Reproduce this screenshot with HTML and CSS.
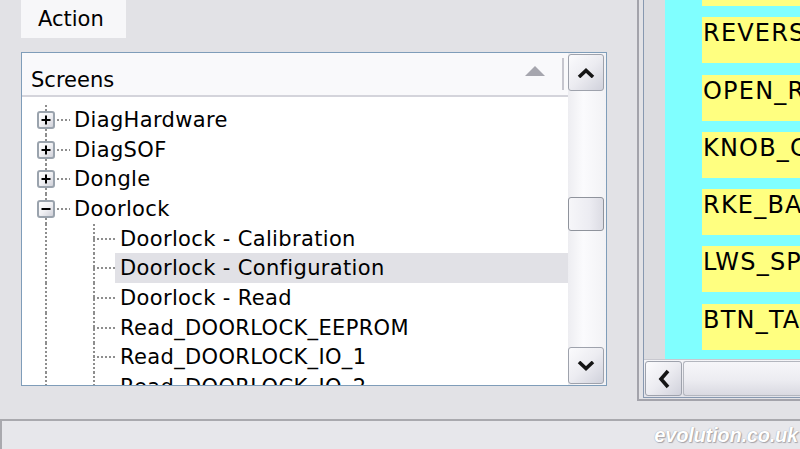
FILE: index.html
```html
<!DOCTYPE html>
<html>
<head>
<meta charset="utf-8">
<link rel="stylesheet" href="styles.css">
</head>
<body>
<div class="app">
  <div class="main">
    <div class="left">
      <div class="tab">Action</div>
      <div class="tree">
        <div class="tree-main">
          <div class="head">
            <span class="head-text">Screens</span>
            <svg class="sort" width="20" height="10" viewBox="0 0 20 10"><path d="M0 10 L10 0 L20 10Z" fill="#a6a6ae"/></svg>
            <span class="sep"></span>
          </div>
          <div class="body">
            <div class="row"><div class="g"><span class="exp"><svg width="12" height="12" viewBox="0 0 12 12"><path d="M1.5 6h9M6 1.5v9" stroke="#000" stroke-width="2"/></svg></span><span class="conn"></span></div><div class="txt top">DiagHardware</div></div>
            <div class="row"><div class="g"><span class="exp"><svg width="12" height="12" viewBox="0 0 12 12"><path d="M1.5 6h9M6 1.5v9" stroke="#000" stroke-width="2"/></svg></span><span class="conn"></span></div><div class="txt top">DiagSOF</div></div>
            <div class="row"><div class="g"><span class="exp"><svg width="12" height="12" viewBox="0 0 12 12"><path d="M1.5 6h9M6 1.5v9" stroke="#000" stroke-width="2"/></svg></span><span class="conn"></span></div><div class="txt top">Dongle</div></div>
            <div class="row"><div class="g"><span class="exp"><svg width="12" height="12" viewBox="0 0 12 12"><path d="M1.5 6h9" stroke="#000" stroke-width="2"/></svg></span><span class="conn"></span></div><div class="txt top">Doorlock</div></div>
            <div class="row"><div class="g"></div><div class="g2"></div><div class="txt">Doorlock - Calibration</div></div>
            <div class="row"><div class="g"></div><div class="g2"></div><div class="txt sel">Doorlock - Configuration</div></div>
            <div class="row"><div class="g"></div><div class="g2"></div><div class="txt">Doorlock - Read</div></div>
            <div class="row"><div class="g"></div><div class="g2"></div><div class="txt">Read_DOORLOCK_EEPROM</div></div>
            <div class="row"><div class="g"></div><div class="g2"></div><div class="txt">Read_DOORLOCK_IO_1</div></div>
            <div class="row"><div class="g"></div><div class="g2"></div><div class="txt">Read_DOORLOCK_IO_2</div></div>
          </div>
        </div>
        <div class="vscroll">
          <div class="sbtn"><svg width="18" height="10" viewBox="0 0 18 10"><path d="M2 9 L9 2.5 L16 9" fill="none" stroke="#151515" stroke-width="3.6"/></svg></div>
          <div class="sbtn thumb"></div>
          <div class="sbtn down"><svg width="18" height="10" viewBox="0 0 18 10"><path d="M2 1 L9 7.5 L16 1" fill="none" stroke="#151515" stroke-width="3.6"/></svg></div>
        </div>
      </div>
    </div>
    <div class="right">
      <div class="rinner">
        <div class="rtop">
          <div class="gutter"></div>
          <div class="cyan">
            <div class="ybox first">&nbsp;</div>
            <div class="ybox">REVERSE_SW</div>
            <div class="ybox">OPEN_REQ</div>
            <div class="ybox">KNOB_CTRL</div>
            <div class="ybox">RKE_BATT</div>
            <div class="ybox">LWS_SPEED</div>
            <div class="ybox">BTN_TAILGATE</div>
          </div>
        </div>
        <div class="hscroll">
          <div class="hbtn"><svg width="12" height="20" viewBox="0 0 12 20"><path d="M10 2 L3 10 L10 18" fill="none" stroke="#151515" stroke-width="3.6"/></svg></div>
          <div class="hthumb"></div>
        </div>
      </div>
    </div>
  </div>
  <div class="status">
    <span class="mark">evolution.co.uk</span>
  </div>
</div>
</body>
</html>
```
FILE: styles.css
```css
html, body {
  margin: 0;
  padding: 0;
}
body {
  width: 800px;
  height: 449px;
  overflow: hidden;
  background: #e2e2e6;
  font-family: "DejaVu Sans", Verdana, sans-serif;
  color: #000;
}
.app {
  display: flex;
  flex-direction: column;
  height: 449px;
}
.main {
  display: flex;
  height: 419px;
  flex: none;
}
.left {
  width: 637px;
  flex: none;
  display: flex;
  flex-direction: column;
  gap: 14px;
}
.tab {
  margin-left: 21px;
  width: 105px;
  height: 38px;
  box-sizing: border-box;
  padding-left: 17px;
  background: #f7f7f9;
  display: flex;
  align-items: center;
  font-size: 21px;
}
.tree {
  margin-left: 21px;
  width: 586px;
  height: 334px;
  box-sizing: border-box;
  border: 1px solid #7f9db9;
  background: #fff;
  display: flex;
}
.tree-main {
  flex: 1;
  min-width: 0;
  display: flex;
  flex-direction: column;
}
.head {
  height: 44px;
  flex: none;
  box-sizing: border-box;
  padding-left: 9px;
  background: #f9f9fb;
  border-bottom: 2px solid #d4d4db;
  display: flex;
  align-items: center;
  font-size: 21px;
}
.head-text {
  padding-top: 12px;
}
.sort {
  margin-left: auto;
  margin-right: 17px;
  margin-bottom: 6px;
}
.sep {
  width: 2px;
  height: 32px;
  background: #c6c6ce;
  margin-right: 4px;
}
.body {
  flex: 1;
  overflow: hidden;
  padding-top: 8px;
}
.row {
  display: flex;
  height: 29.7px;
  font-size: 21px;
  letter-spacing: 0.35px;
  white-space: nowrap;
}
.g {
  width: 48px;
  flex: none;
  display: flex;
  align-items: center;
  background-image: repeating-linear-gradient(to bottom, #8e8e8e 0 2px, transparent 2px 4px);
  background-size: 2px 100%;
  background-position: 23px 0;
  background-repeat: no-repeat;
}
.exp {
  margin-left: 15px;
  width: 18px;
  height: 18px;
  box-sizing: border-box;
  border: 2px solid #9aa3ad;
  border-radius: 3px;
  background: linear-gradient(135deg, #ffffff 0%, #f1f1f4 50%, #cfd0d8 100%);
  display: flex;
  align-items: center;
  justify-content: center;
}
.conn {
  flex: 1;
  height: 2px;
  margin-left: 2px;
  background-image: repeating-linear-gradient(to right, #8e8e8e 0 2px, transparent 2px 4px);
}
.g2 {
  width: 45px;
  flex: none;
  background-image:
    repeating-linear-gradient(to bottom, #8e8e8e 0 2px, transparent 2px 4px),
    repeating-linear-gradient(to right, #8e8e8e 0 2px, transparent 2px 4px);
  background-size: 2px 100%, 22px 2px;
  background-position: 23px 0, 23px center;
  background-repeat: no-repeat;
}
.txt {
  flex: 1;
  display: flex;
  align-items: center;
  padding-left: 5px;
}
.txt.top {
  padding-left: 4px;
}
.txt.sel {
  background: #e1e1e6;
}
.vscroll {
  width: 38px;
  flex: none;
  box-sizing: border-box;
  padding: 1px 2px 1px 0;
  display: flex;
  flex-direction: column;
  background: linear-gradient(to right, #ededf1, #fbfbfd 40%, #f2f2f5);
}
.sbtn {
  height: 37px;
  flex: none;
  box-sizing: border-box;
  border: 1px solid #9ea2ac;
  border-radius: 3px;
  background: linear-gradient(135deg, #fbfbfd 0%, #ececf1 50%, #d0d1db 100%);
  display: flex;
  align-items: center;
  justify-content: center;
}
.sbtn.thumb {
  height: 34px;
  margin-top: 106px;
  border-color: #8f939c;
  background: linear-gradient(to right, #f6f6f9 0%, #ececf2 60%, #dcdce4 100%);
}
.sbtn.down {
  margin-top: auto;
}
.right {
  flex: 1;
  min-width: 0;
  height: 401px;
  box-sizing: border-box;
  border-left: 2px solid #a3a3ab;
  border-bottom: 2px solid #a3a3ab;
  padding: 0 0 1px 4px;
  display: flex;
}
.rinner {
  flex: 1;
  min-width: 0;
  display: flex;
  flex-direction: column;
  border-left: 1px solid #8798b0;
  border-bottom: 1px solid #8798b0;
  background: #f3f3f6;
}
.rtop {
  flex: 1;
  min-height: 0;
  display: flex;
  overflow: hidden;
}
.gutter {
  width: 21px;
  flex: none;
  background: #dcdce0;
}
.cyan {
  flex: 1;
  min-width: 0;
  overflow: hidden;
  background: #80ffff;
  padding-left: 37px;
  display: flex;
  flex-direction: column;
  gap: 11.3px;
}
.ybox {
  height: 46px;
  flex: none;
  box-sizing: border-box;
  padding: 4px 0 0 1px;
  background: #ffff80;
  font-size: 24px;
  line-height: 25px;
  letter-spacing: 1.2px;
  white-space: nowrap;
  overflow: hidden;
}
.ybox.first {
  margin-top: -40px;
}
.hscroll {
  height: 38px;
  flex: none;
  box-sizing: border-box;
  border-top: 1px solid #c8c8cf;
  padding: 1px 0 1px 1px;
  display: flex;
  background: linear-gradient(#f5f5f8, #e2e2e8);
}
.hbtn {
  width: 37px;
  flex: none;
  box-sizing: border-box;
  border: 1px solid #9ea2ac;
  border-radius: 3px;
  background: linear-gradient(135deg, #fbfbfd 0%, #ececf1 50%, #d0d1db 100%);
  display: flex;
  align-items: center;
  justify-content: center;
}
.hthumb {
  flex: 1;
  margin-left: 1px;
  box-sizing: border-box;
  border: 1px solid #b3b6be;
  border-right: none;
  border-radius: 3px 0 0 3px;
  background: linear-gradient(#f6f6f9, #ececf1 55%, #d9d9e1);
}
.status {
  height: 30px;
  flex: none;
  box-sizing: border-box;
  border-top: 2px solid #a9a9ae;
  border-left: 2px solid #a9a9ae;
  background: #e7e7eb;
  display: flex;
  justify-content: flex-end;
  align-items: center;
  padding-right: 2px;
}
.mark {
  font-family: "Liberation Sans", Arial, sans-serif;
  font-style: italic;
  font-weight: bold;
  font-size: 20px;
  letter-spacing: -0.2px;
  color: #fff;
  text-shadow: 0 0 1px #8e8e94, 1px 1px 1px #a8a8ae;
}
```
